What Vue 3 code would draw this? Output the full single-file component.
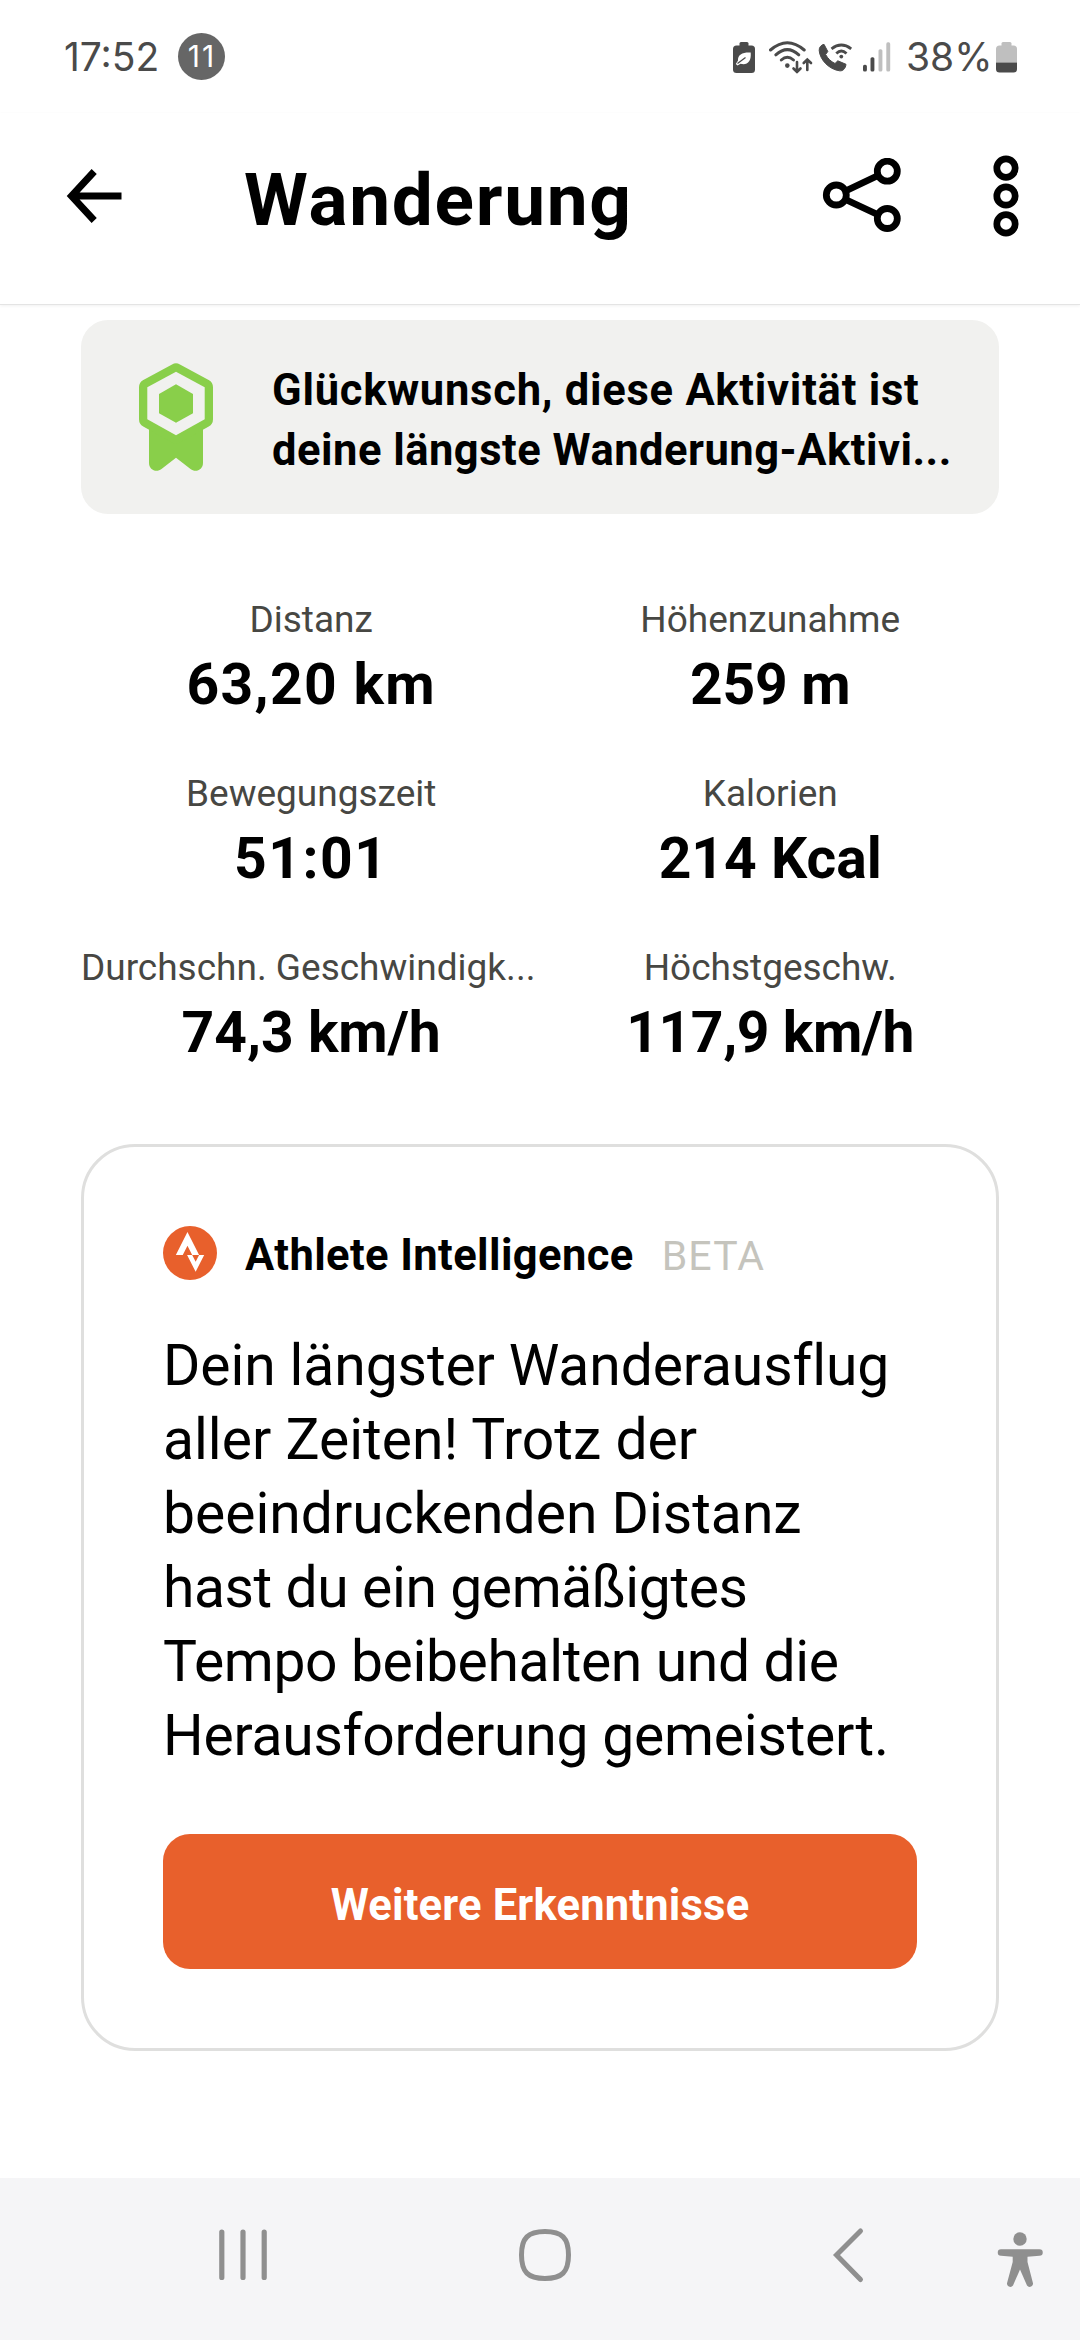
<script setup>
const stats = [
  { key: "distance", label: "Distanz", value: "63,20 km", spacing: 1.3 },
  { key: "elevation", label: "Höhenzunahme", value: "259 m", spacing: -0.3 },
  { key: "time", label: "Bewegungszeit", value: "51:01", spacing: 1.5 },
  { key: "calories", label: "Kalorien", value: "214 Kcal", spacing: 0 },
  { key: "avg-speed", label: "Durchschn. Geschwindigk...", value: "74,3 km/h", spacing: 0 },
  { key: "max-speed", label: "Höchstgeschw.", value: "117,9 km/h", spacing: -0.4 }
];

const summary = [
  { text: "Dein längster Wanderausflug", spacing: -0.1 },
  { text: "aller Zeiten! Trotz der", spacing: 0 },
  { text: "beeindruckenden Distanz", spacing: 0 },
  { text: "hast du ein gemäßigtes", spacing: -0.4 },
  { text: "Tempo beibehalten und die", spacing: -0.36 },
  { text: "Herausforderung gemeistert.", spacing: -0.22 }
];
</script>

<template>
  <div class="screen">
    <div class="status-bar">
      <span class="clock">17:52</span>
      <span class="badge">11</span>
      <div class="status-icons">
        <svg class="icon-saver" width="24" height="40" viewBox="0 0 24 40">
          <rect x="7.5" y="5" width="9" height="6" rx="1.5" fill="#4a4a4a" />
          <rect x="1" y="8.5" width="22" height="27.5" rx="3.5" fill="#4a4a4a" />
          <path d="M18.7 15.5C11 15 5.5 17.500 6 23.500L3.800 27L5.500 28.500L8.500 26.800C15 28.500 19.500 25 18.700 15.500Z" fill="#fff" />
          <path d="M5.5 26.5L13.5 20.5" stroke="#4a4a4a" stroke-width="1.3" />
        </svg>
        <svg class="icon-wifi" width="46" height="40" viewBox="0 0 46 40" fill="none" stroke="#4a4a4a" stroke-width="3" stroke-linecap="round">
          <path d="M3.5 13Q20.3 -1.5 37.2 13" />
          <path d="M8.8 17.8Q20.3 7.5 31.8 17.8" />
          <path d="M14.3 23Q20.3 17.5 26.5 23" />
          <circle cx="20.3" cy="28.6" r="2.3" fill="#4a4a4a" stroke="none" />
          <path d="M30 25v10M26.5 31.5l3.5 3.5l3.5-3.5" stroke-width="2.6" />
          <path d="M40.3 33V22.5M36.7 26l3.6-3.5l3.7 3.5" stroke-width="2.6" />
        </svg>
        <svg class="icon-call" width="35" height="40" viewBox="0 0 35 40">
          <path d="M6 7.3L9.8 14.5L7.6 17.5C9.8 21.5 12.8 24.5 17 26.5L19.8 23.8L28 27.3C27.5 31.5 25 34.3 21.5 33.8C11 32.3 2 23 1.2 13.5C1 10.5 3 8 6 7.3Z" fill="#4a4a4a" stroke="#4a4a4a" stroke-linejoin="round" />
          <g fill="none" stroke="#4a4a4a" stroke-width="2.8">
            <path d="M13.5 11.8Q23.3 4.2 33.2 11.8" />
            <path d="M18.3 16.5Q23.3 11.5 28.5 16.5" />
          </g>
          <circle cx="23.3" cy="19.6" r="1.9" fill="#4a4a4a" />
        </svg>
        <svg class="icon-signal" width="29" height="40" viewBox="0 0 29 40">
          <rect x="1" y="27.8" width="3.9" height="6.8" rx="1.6" fill="#4a4a4a" />
          <rect x="8.5" y="20.2" width="3.9" height="14.4" rx="1.6" fill="#4a4a4a" />
          <rect x="16.5" y="12.2" width="3.9" height="22.4" rx="1.6" fill="#bfbfbf" />
          <rect x="24.3" y="5.3" width="3.9" height="29.3" rx="1.6" fill="#bfbfbf" />
        </svg>
        <span class="percent">38%</span>
        <svg width="23" height="40" viewBox="0 0 23 40">
          <rect x="6.5" y="5" width="10" height="6" rx="1.5" fill="#bfbfbf" />
          <path d="M1 25.5V12q0-3.5 3.5-3.5h14q3.5 0 3.5 3.5v13.5z" fill="#bfbfbf" />
          <path d="M1 25.5h21V32q0 3.5-3.5 3.5h-14Q1 35.5 1 32z" fill="#4a4a4a" />
        </svg>
      </div>
    </div>

    <header class="toolbar">
      <svg class="back" width="56" height="56" viewBox="0 0 56 56" fill="none" stroke="#000" stroke-width="7">
        <path d="M28.2 3.500L5.500 28L28.200 52.500M5.500 28H55.500" />
      </svg>
      <h1>Wanderung</h1>
      <svg class="share" width="80" height="76" viewBox="0 0 80 76" fill="none" stroke="#000" stroke-width="6.8">
        <path d="M23.5 33L54.5 18.3M23.5 41.5L54.5 56" />
        <circle cx="14.3" cy="37" r="10" />
        <circle cx="65.3" cy="13.2" r="10" />
        <circle cx="65.3" cy="60.5" r="10" />
      </svg>
      <svg class="more" width="26" height="84" viewBox="0 0 26 84" fill="none" stroke="#000" stroke-width="6.7">
        <circle cx="13" cy="14.1" r="9.2" />
        <circle cx="13" cy="42" r="9.2" />
        <circle cx="13" cy="69.9" r="9.2" />
      </svg>
    </header>

    <main class="content">
      <section class="banner">
        <svg width="75" height="108" viewBox="0 0 75 108">
          <path d="M10 55H64V100C64 107 56.5 110 51.5 106L37 94.8L22.5 106C17.5 110 10 107 10 100Z" fill="#89cf4a" />
          <path d="M37 8.7L65.7 24.3V56.3L37 72.3L8.3 56.3V24.3Z" fill="#89cf4a" stroke="#89cf4a" stroke-width="16.6" stroke-linejoin="round" />
          <path d="M37 8.7L65.7 24.3V56.3L37 72.3L8.3 56.3V24.3Z" fill="#f1f1ef" />
          <path d="M37 21.3L54 31V50.3L37 59.7L20 50.3V31Z" fill="#89cf4a" />
        </svg>
        <p>
          <span class="banner-first">Glückwunsch, diese Aktivität ist</span><br />
          <span class="banner-second">deine längste Wanderung-Aktivi...</span>
        </p>
      </section>

      <section class="stats">
        <div v-for="stat in stats" :key="stat.key" class="stat">
          <div class="stat-label">{{ stat.label }}</div>
          <div class="stat-value" :style="{ letterSpacing: `${stat.spacing}px` }">{{ stat.value }}</div>
        </div>
      </section>

      <section class="card">
        <div class="card-head">
          <svg width="54" height="54" viewBox="0 0 54 54">
            <circle cx="27" cy="27" r="27" fill="#e8602c" />
            <g transform="translate(7.1 6) scale(1.66)" fill="#fff">
              <path d="M15.387 17.944l-2.089-4.116h-3.065L15.387 24l5.15-10.172h-3.066" />
              <path d="M10.463 8.229l2.836 5.598h4.172L10.463 0l-7 13.828h4.169" />
            </g>
          </svg>
          <span class="card-title">Athlete Intelligence</span>
          <span class="card-beta">BETA</span>
        </div>
        <p class="summary">
          <span v-for="line in summary" :key="line.text" :style="{ letterSpacing: `${line.spacing}px` }">{{ line.text }}</span>
        </p>
        <button type="button">Weitere Erkenntnisse</button>
      </section>
    </main>

    <nav class="nav-bar">
      <svg class="nav-recents" width="60" height="70" viewBox="0 0 60 70" stroke="#8f8f8f" stroke-width="5.2" stroke-linecap="round">
        <path d="M8.8 12V57.5M30 12V57.5M51.2 12V57.5" />
      </svg>
      <svg class="nav-home" width="60" height="70" viewBox="0 0 60 70" fill="none" stroke="#8f8f8f" stroke-width="5">
        <path d="M30 11.5C47 11.5 53.5 18 53.5 35S47 58.5 30 58.5S6.5 52 6.5 35S13 11.5 30 11.5Z" />
      </svg>
      <svg class="nav-back" width="60" height="70" viewBox="0 0 60 70" fill="none" stroke="#8f8f8f" stroke-width="5" stroke-linecap="round">
        <path d="M41.5 11L17.5 35L41.5 59.5" />
      </svg>
      <svg class="nav-access" width="60" height="70" viewBox="0 0 60 70" fill="#8f8f8f">
        <circle cx="30" cy="19" r="6.7" />
        <path d="M11 29.2H49.5a3.2 3.2 0 0 1 0 6.5L37.5 36.7V42L42.8 62.5A3.3 3.3 0 0 1 37 65.5L30 49.5L23 65.5A3.3 3.3 0 0 1 17.2 62.5L22.7 42V36.7L11 35.7a3.2 3.2 0 0 1 0-6.5Z" />
      </svg>
    </nav>
  </div>
</template>

<style>
body {
  margin: 0;
  background: #fff;
}
</style>

<style scoped>
.screen {
  display: flex;
  flex-direction: column;
  width: 1080px;
  height: 2340px;
  overflow: hidden;
  background: #fff;
  color: #000;
  font-family: Roboto, "Liberation Sans", sans-serif;
}

.screen svg {
  display: block;
  flex: none;
}

.status-bar {
  display: flex;
  align-items: center;
  box-sizing: border-box;
  height: 113px;
  padding: 0 62px 0 64px;
  font-family: Inter, sans-serif;
  color: #4a4a4a;
}

.clock {
  width: 114px;
  font-size: 39px;
}

.badge {
  box-sizing: border-box;
  width: 47px;
  height: 47px;
  padding-left: 1px;
  border-radius: 50%;
  background: #666;
  color: #fff;
  font-size: 30px;
  letter-spacing: 2px;
  line-height: 47px;
  text-align: center;
}

.status-icons {
  display: flex;
  align-items: center;
  margin-left: auto;
}

.icon-saver {
  margin-right: 11px;
}

.icon-wifi {
  margin-right: 5px;
}

.icon-call {
  margin-right: 9px;
}

.icon-signal {
  margin-right: 15px;
}

.percent {
  width: 89px;
  font-size: 39px;
  white-space: nowrap;
}

.toolbar {
  display: flex;
  align-items: center;
  box-sizing: border-box;
  height: 192px;
  padding: 0 61px 26px 66px;
  border-bottom: 1px solid #e4e4e4;
  box-shadow: 0 1px 3px rgba(0, 0, 0, 0.06);
}

.toolbar h1 {
  margin: 0 auto 0 122px;
  padding-top: 9px;
  font-size: 73px;
  font-weight: 700;
  letter-spacing: 1.7px;
  line-height: 86px;
}

.share {
  margin-right: 91px;
}

.content {
  padding: 15px 81px 0;
}

.banner {
  display: flex;
  align-items: center;
  box-sizing: border-box;
  height: 194px;
  padding-left: 58px;
  border-radius: 27px;
  background: #f1f1ef;
}

.banner p {
  margin: 0 0 0 58px;
  padding-top: 8px;
  font-size: 43.5px;
  font-weight: 700;
  line-height: 60px;
  white-space: nowrap;
}

.banner-first {
  letter-spacing: 0.75px;
}

.banner-second {
  letter-spacing: 0.5px;
}

.stats {
  display: grid;
  grid-template-columns: 1fr 1fr;
  row-gap: 51px;
  margin-top: 82px;
  text-align: center;
}

.stat {
  height: 123px;
  white-space: nowrap;
}

.stat-label {
  height: 48px;
  margin-bottom: 7px;
  color: #474743;
  font-size: 37px;
  line-height: 48px;
}

.stat:nth-child(5) .stat-label {
  margin-right: 6px;
}

.stat-value {
  font-size: 57px;
  font-weight: 700;
  line-height: 68px;
}

.card {
  margin-top: 77px;
  padding: 79px;
  border: 3px solid #dfdfde;
  border-radius: 54px;
}

.card-head {
  display: flex;
  align-items: center;
  height: 54px;
  font-size: 43.5px;
  line-height: 50px;
  white-space: nowrap;
}

.card-title {
  margin-left: 28px;
  padding-top: 5px;
  font-weight: 700;
  letter-spacing: 0.4px;
}

.card-beta {
  margin-left: 28px;
  padding-top: 5px;
  color: #c5c4bd;
  font-size: 41px;
  letter-spacing: 1.1px;
}

.summary {
  display: flex;
  flex-direction: column;
  margin: 49px 0 61px;
  font-size: 57px;
  line-height: 74px;
  white-space: nowrap;
}

.card button {
  display: block;
  box-sizing: border-box;
  width: 100%;
  height: 135px;
  padding: 9px 0 0;
  border: 0;
  border-radius: 27px;
  background: #e8602c;
  color: #fff;
  font: 700 43.5px/50px Roboto, "Liberation Sans", sans-serif;
  letter-spacing: 0.2px;
}

.nav-bar {
  display: flex;
  align-items: center;
  box-sizing: border-box;
  height: 162px;
  margin-top: auto;
  padding: 0 30px 8px 213px;
  background: #f5f5f7;
}

.nav-home {
  margin-left: 242px;
}

.nav-back {
  margin-left: 244px;
}

.nav-access {
  margin-left: auto;
}
</style>
